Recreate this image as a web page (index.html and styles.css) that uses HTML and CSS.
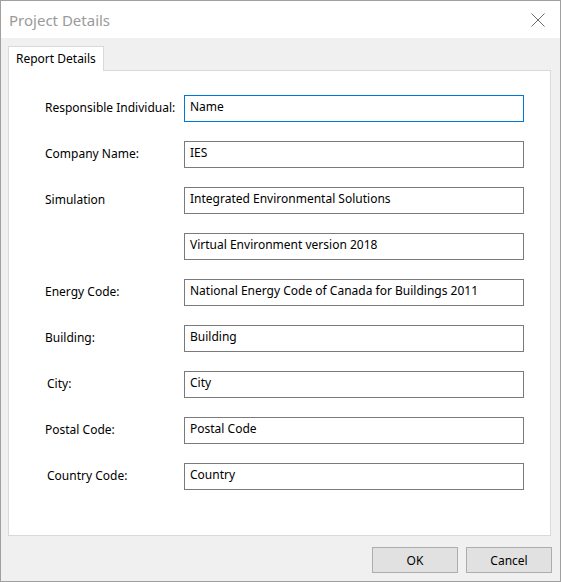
FILE: index.html
```html
<!DOCTYPE html>
<html lang="en">
<head>
  <meta charset="UTF-8">
  <title>Project Details</title>
  <link rel="stylesheet" href="styles.css">
</head>
<body>

<div class="window">
  <div class="titlebar">
    <span class="title">Project Details</span>
    <svg class="close" width="14" height="14" viewBox="0 0 14 14">
      <path d="M0.5 0.5 L13.5 13.5 M13.5 0.5 L0.5 13.5" stroke="#6b6b6b" stroke-width="1" fill="none"/>
    </svg>
  </div>

  <div class="content">
    <div class="tabs">
      <div class="tab">Report Details</div>
    </div>

    <div class="panel">
      <div class="form">
        <label>Responsible Individual:</label>
        <div class="field focused">Name</div>

        <label>Company Name:</label>
        <div class="field">IES</div>

        <label>Simulation</label>
        <div class="field">Integrated Environmental Solutions</div>

        <label></label>
        <div class="field">Virtual Environment version 2018</div>

        <label>Energy Code:</label>
        <div class="field">National Energy Code of Canada for Buildings 2011</div>

        <label>Building:</label>
        <div class="field">Building</div>

        <label class="shift">City:</label>
        <div class="field">City</div>

        <label>Postal Code:</label>
        <div class="field">Postal Code</div>

        <label class="shift">Country Code:</label>
        <div class="field">Country</div>
      </div>
    </div>

    <div class="buttons">
      <button class="btn">OK</button>
      <button class="btn">Cancel</button>
    </div>
  </div>
</div>

</body>
</html>
```

FILE: styles.css
```css
* {
  margin: 0;
  padding: 0;
  box-sizing: border-box;
  font-family: "Noto Sans", "Liberation Sans", sans-serif;
}

body {
  background: #ffffff;
}

.window {
  width: 561px;
  height: 582px;
  border: 1px solid #a0a0a0;
  display: flex;
  flex-direction: column;
  background: #f0f0f0;
}

.titlebar {
  height: 37px;
  background: #ffffff;
  display: flex;
  align-items: center;
  justify-content: space-between;
  padding: 0 15px 0 8px;
}

.title {
  font-size: 15px;
  color: #9a9a9a;
}

.close {
  display: block;
}

.content {
  flex: 1;
  padding: 8px 9px 0 7px;
  display: flex;
  flex-direction: column;
}

.tabs {
  display: flex;
  height: 24px;
}

.tab {
  background: #ffffff;
  border: 1px solid #d9d9d9;
  border-bottom: none;
  padding: 3px 7px 0 7px;
  font-size: 12px;
  color: #000;
  position: relative;
  z-index: 1;
  height: 25px;
}

.panel {
  background: #ffffff;
  border: 1px solid #d9d9d9;
  height: 466px;
  padding: 24px 26px 0 36px;
}

.form {
  display: grid;
  grid-template-columns: 139px 340px;
  grid-template-rows: repeat(9, 27px);
  row-gap: 19px;
  align-items: center;
}

label {
  font-size: 12px;
  color: #000;
  line-height: 16px;
  margin-top: -2px;
}

label.shift {
  padding-left: 2px;
}

.field {
  height: 27px;
  border: 1px solid #7a7a7a;
  font-size: 12px;
  color: #000;
  padding: 3px 5px;
  line-height: 16px;
  white-space: nowrap;
  overflow: hidden;
}

.field.focused {
  border-color: #0078d7;
}

.buttons {
  display: flex;
  justify-content: flex-end;
  gap: 8px;
  padding-top: 11px;
  margin-right: -1px;
}

.btn {
  width: 86px;
  height: 26px;
  background: #e1e1e1;
  border: 1px solid #adadad;
  font-size: 12px;
  color: #000;
}
```
